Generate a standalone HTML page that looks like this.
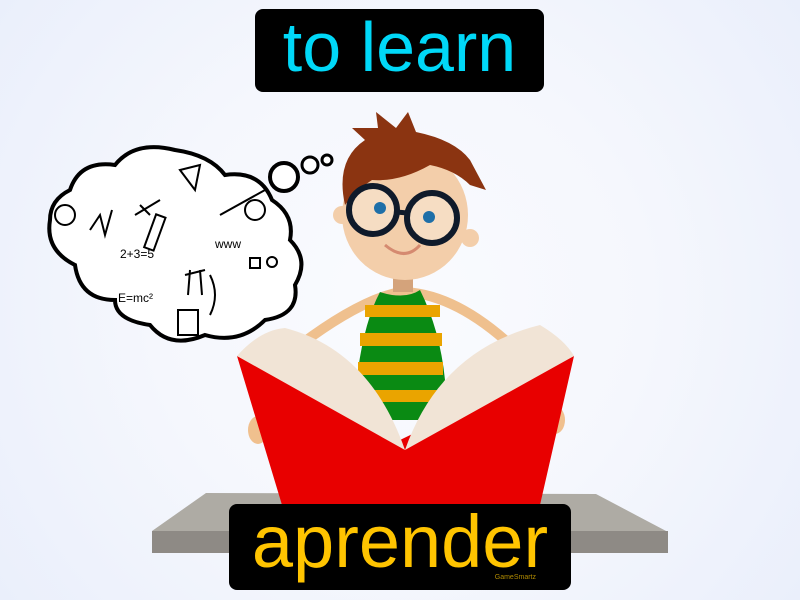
<!DOCTYPE html>
<html><head><meta charset="utf-8"><style>
html,body{margin:0;padding:0;width:800px;height:600px;overflow:hidden;background:radial-gradient(circle at 400px 300px,#fafbfe 0,#f5f7fd 250px,#eaeffb 500px);font-family:"Liberation Sans",sans-serif}
.lab{position:absolute;background:#000;border-radius:8px;text-align:center;white-space:nowrap}
</style></head><body>
<svg width="800" height="600" style="position:absolute;left:0;top:0">
<polygon points="206,493 596,494 668,532 152,531" fill="#aeaba4"/>
<rect x="152" y="531" width="516" height="22" fill="#8e8a85"/>
<path d="M300,345 Q360,300 400,292 Q450,292 505,340" stroke="#efc08e" stroke-width="10" fill="none"/>
<path d="M380,292 Q405,300 420,290 Q440,330 445,380 L420,420 L390,420 L358,370 Q365,320 380,292Z" fill="#0a8a13"/>
<rect x="365" y="305" width="75" height="12" fill="#eaa400"/>
<rect x="360" y="333" width="82" height="13" fill="#eaa400"/>
<rect x="358" y="362" width="85" height="13" fill="#eaa400"/>
<rect x="365" y="390" width="75" height="12" fill="#eaa400"/>
<rect x="393" y="270" width="20" height="22" fill="#d4a37b"/>
<ellipse cx="405" cy="215" rx="63" ry="65" fill="#f3ceaa"/>
<circle cx="342" cy="215" r="9" fill="#f3ceaa"/><circle cx="470" cy="238" r="9" fill="#f3ceaa"/>
<path d="M345,205 Q335,160 365,140 L352,128 L378,128 L376,112 L396,128 L408,112 L416,132 Q455,140 470,160 L486,190 L470,185 Q455,170 430,165 Q400,182 372,180 Q356,190 345,205Z" fill="#8b3411"/>
<circle cx="373" cy="210" r="24" fill="#fff" stroke="#0f1a2a" stroke-width="6" fill-opacity=".3"/>
<circle cx="432" cy="218" r="25" fill="#fff" stroke="#0f1a2a" stroke-width="6" fill-opacity=".3"/>
<line x1="396" y1="212" x2="408" y2="213" stroke="#0f1a2a" stroke-width="5"/>
<circle cx="380" cy="208" r="6" fill="#1e6fa8"/><circle cx="429" cy="217" r="6" fill="#1e6fa8"/>
<path d="M385,245 Q405,262 420,245" stroke="#d58a70" stroke-width="3" fill="none"/>
<ellipse cx="258" cy="430" rx="10" ry="14" fill="#f0c08e"/>
<ellipse cx="555" cy="420" rx="10" ry="14" fill="#f0c08e"/>
<polygon points="237,356 400,440 574,356 540,505 282,505" fill="#e80000"/>
<path d="M237,356 Q260,330 285,328 Q370,350 405,450 Q440,350 540,325 Q565,340 574,356 L405,450 Z" fill="#f1e4d6"/>
<circle cx="284" cy="177" r="14" fill="#fff" stroke="#000" stroke-width="4"/>
<circle cx="310" cy="165" r="8" fill="#fff" stroke="#000" stroke-width="3"/>
<circle cx="327" cy="160" r="5" fill="#fff" stroke="#000" stroke-width="3"/>
<g fill="#fff" stroke="#000" stroke-width="4">
<path d="M70,190 Q80,160 115,165 Q135,140 175,150 Q210,155 225,175 Q260,170 272,200 Q295,215 290,240 Q310,260 295,285 Q300,315 265,320 Q240,345 205,335 Q170,350 150,325 Q115,320 115,300 Q80,300 75,265 Q45,250 50,220 Q50,200 70,190Z"/>
</g>
<g fill="none" stroke="#000" stroke-width="2">
<circle cx="65" cy="215" r="10"/><circle cx="255" cy="210" r="10"/>
<path d="M90,230 L100,215 L105,235 L112,210"/><path d="M140,205 L150,215 M135,215 L160,200"/>
<rect x="150" y="215" width="10" height="35" transform="rotate(20 155 232)"/>
<path d="M220,215 L265,190"/><path d="M180,170 L195,190 L200,165Z"/>
<path d="M185,275 L205,270 M190,270 L188,295 M200,270 L202,295"/>
<path d="M210,275 Q220,295 210,315"/><rect x="178" y="310" width="20" height="25"/>
<rect x="250" y="258" width="10" height="10"/><circle cx="272" cy="262" r="5"/>
</g>
<g font-family="Liberation Sans,sans-serif" font-size="12" fill="#000">
<text x="120" y="258">2+3=5</text><text x="118" y="302">E=mc²</text><text x="215" y="248">www</text>
</g>
</svg>
<div class="lab" style="left:255px;top:9px;width:289px;height:83px;color:#00d8f8;font-size:70px;line-height:76px">to learn</div>
<div class="lab" style="left:229px;top:504px;width:342px;height:86px;color:#ffc400;font-size:74px;line-height:76px">aprender
<div style="position:absolute;right:35px;bottom:8px;font-size:7px;line-height:8px;color:#b08a00">GameSmartz</div></div>
</body></html>
